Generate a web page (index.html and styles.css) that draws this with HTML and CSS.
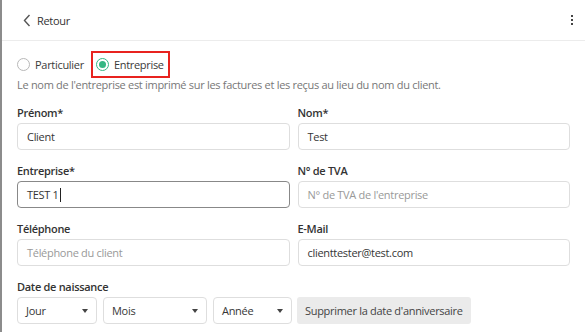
FILE: index.html
```html
<!DOCTYPE html>
<html lang="fr">
<head>
<meta charset="utf-8">
<link rel="stylesheet" href="styles.css">
</head>
<body>
<div class="page">
  <header class="topbar">
    <a class="back">
      <svg class="chev" width="8" height="13" viewBox="0 0 8 13"><polyline points="6.5,1 1.5,6.5 6.5,12" fill="none" stroke="#555" stroke-width="1.4"/></svg>
      <span>Retour</span>
    </a>
    <span class="kebab"><i></i><i></i><i></i></span>
  </header>
  <main class="form">
    <div class="radios">
      <label class="radio"><span class="circle"></span>Particulier</label>
      <label class="radio selected"><span class="circle"><span class="dot"></span></span>Entreprise</label>
    </div>
    <p class="help">Le nom de l'entreprise est imprimé sur les factures et les reçus au lieu du nom du client.</p>
    <div class="grid">
      <div class="field">
        <div class="label">Prénom*</div>
        <div class="input">Client</div>
      </div>
      <div class="field">
        <div class="label">Nom*</div>
        <div class="input">Test</div>
      </div>
      <div class="field">
        <div class="label">Entreprise*</div>
        <div class="input focus">TEST 1<span class="caret"></span></div>
      </div>
      <div class="field">
        <div class="label">N° de TVA</div>
        <div class="input ph">N° de TVA de l'entreprise</div>
      </div>
      <div class="field">
        <div class="label">Téléphone</div>
        <div class="input ph">Téléphone du client</div>
      </div>
      <div class="field">
        <div class="label">E-Mail</div>
        <div class="input">clienttester@test.com</div>
      </div>
    </div>
    <div class="field">
      <div class="label">Date de naissance</div>
      <div class="dates">
        <div class="select s-day">Jour<span class="tri"></span></div>
        <div class="select s-month">Mois<span class="tri"></span></div>
        <div class="select s-year">Année<span class="tri"></span></div>
        <button class="btn">Supprimer la date d'anniversaire</button>
      </div>
    </div>
  </main>
</div>
</body>
</html>
```
FILE: styles.css
```css
* { box-sizing: border-box; }
html, body { margin: 0; padding: 0; background: #fff; }
body {
  font-family: "Open Sans", "Noto Sans", sans-serif;
  font-size: 11px;
  letter-spacing: -0.3px;
  color: #333;
}
.page {
  width: 585px;
  height: 332px;
  border-left: 2px solid #8c8c8c;
  overflow: hidden;
}
.topbar {
  height: 41px;
  border-bottom: 1px solid #ececec;
  display: flex;
  align-items: center;
  justify-content: space-between;
  padding: 0 12px 0 21px;
}
.back {
  display: flex;
  align-items: center;
  gap: 6px;
  font-size: 11px;
  color: #333;
}
.chev { display: block; }
.kebab {
  display: flex;
  flex-direction: column;
  gap: 1.5px;
}
.kebab i {
  display: block;
  width: 2.5px;
  height: 2.5px;
  background: #444;
}
.form { padding: 10px 15px 0 15px; }
.radios {
  display: flex;
  align-items: center;
  gap: 7px;
  height: 27px;
}
.radio {
  display: flex;
  align-items: center;
  gap: 5px;
  height: 27px;
  font-size: 11px;
  color: #3a3a3a;
}
.radio.selected {
  border: 2px solid #e8231f;
  padding: 0 4px 0 3px;
}
.circle {
  width: 13px;
  height: 13px;
  border: 1px solid #b8b8b8;
  border-radius: 50%;
  display: flex;
  align-items: center;
  justify-content: center;
}
.selected .circle { border: 1.5px solid #35b783; }
.dot {
  width: 7px;
  height: 7px;
  border-radius: 50%;
  background: #35b783;
}
.help {
  margin: -1px 0 0 0;
  line-height: 16px;
  color: #777;
  font-size: 11px;
}
.grid {
  display: grid;
  grid-template-columns: 1fr 1fr;
  column-gap: 8px;
  margin-top: 11px;
}
.field { margin-bottom: 12px; }
.label {
  font-weight: 600;
  line-height: 18px;
  margin-bottom: 1px;
  color: #333;
}
.input {
  height: 27px;
  border: 1px solid #dedede;
  border-radius: 4px;
  padding: 0 9px;
  display: flex;
  align-items: center;
  color: #363636;
}
.input.ph { color: #999; }
.input.focus { border-color: #888; }
.caret {
  display: inline-block;
  width: 1px;
  height: 14px;
  background: #222;
  margin-left: 1px;
}
.dates {
  display: flex;
  gap: 6px;
}
.select {
  height: 27px;
  border: 1px solid #dedede;
  border-radius: 4px;
  padding: 0 8px 0 8px;
  display: flex;
  align-items: center;
  justify-content: space-between;
  color: #363636;
}
.s-day { width: 80px; }
.s-month { width: 104px; }
.s-year { width: 79px; }
.tri {
  width: 0;
  height: 0;
  border-left: 3.5px solid transparent;
  border-right: 3.5px solid transparent;
  border-top: 4px solid #444;
}
.btn {
  height: 27px;
  border: none;
  border-radius: 3px;
  background: #ebebeb;
  font-family: inherit;
  font-size: 11px;
  letter-spacing: -0.3px;
  color: #444;
  padding: 0 8px;
  margin-left: -1px;
}
```
